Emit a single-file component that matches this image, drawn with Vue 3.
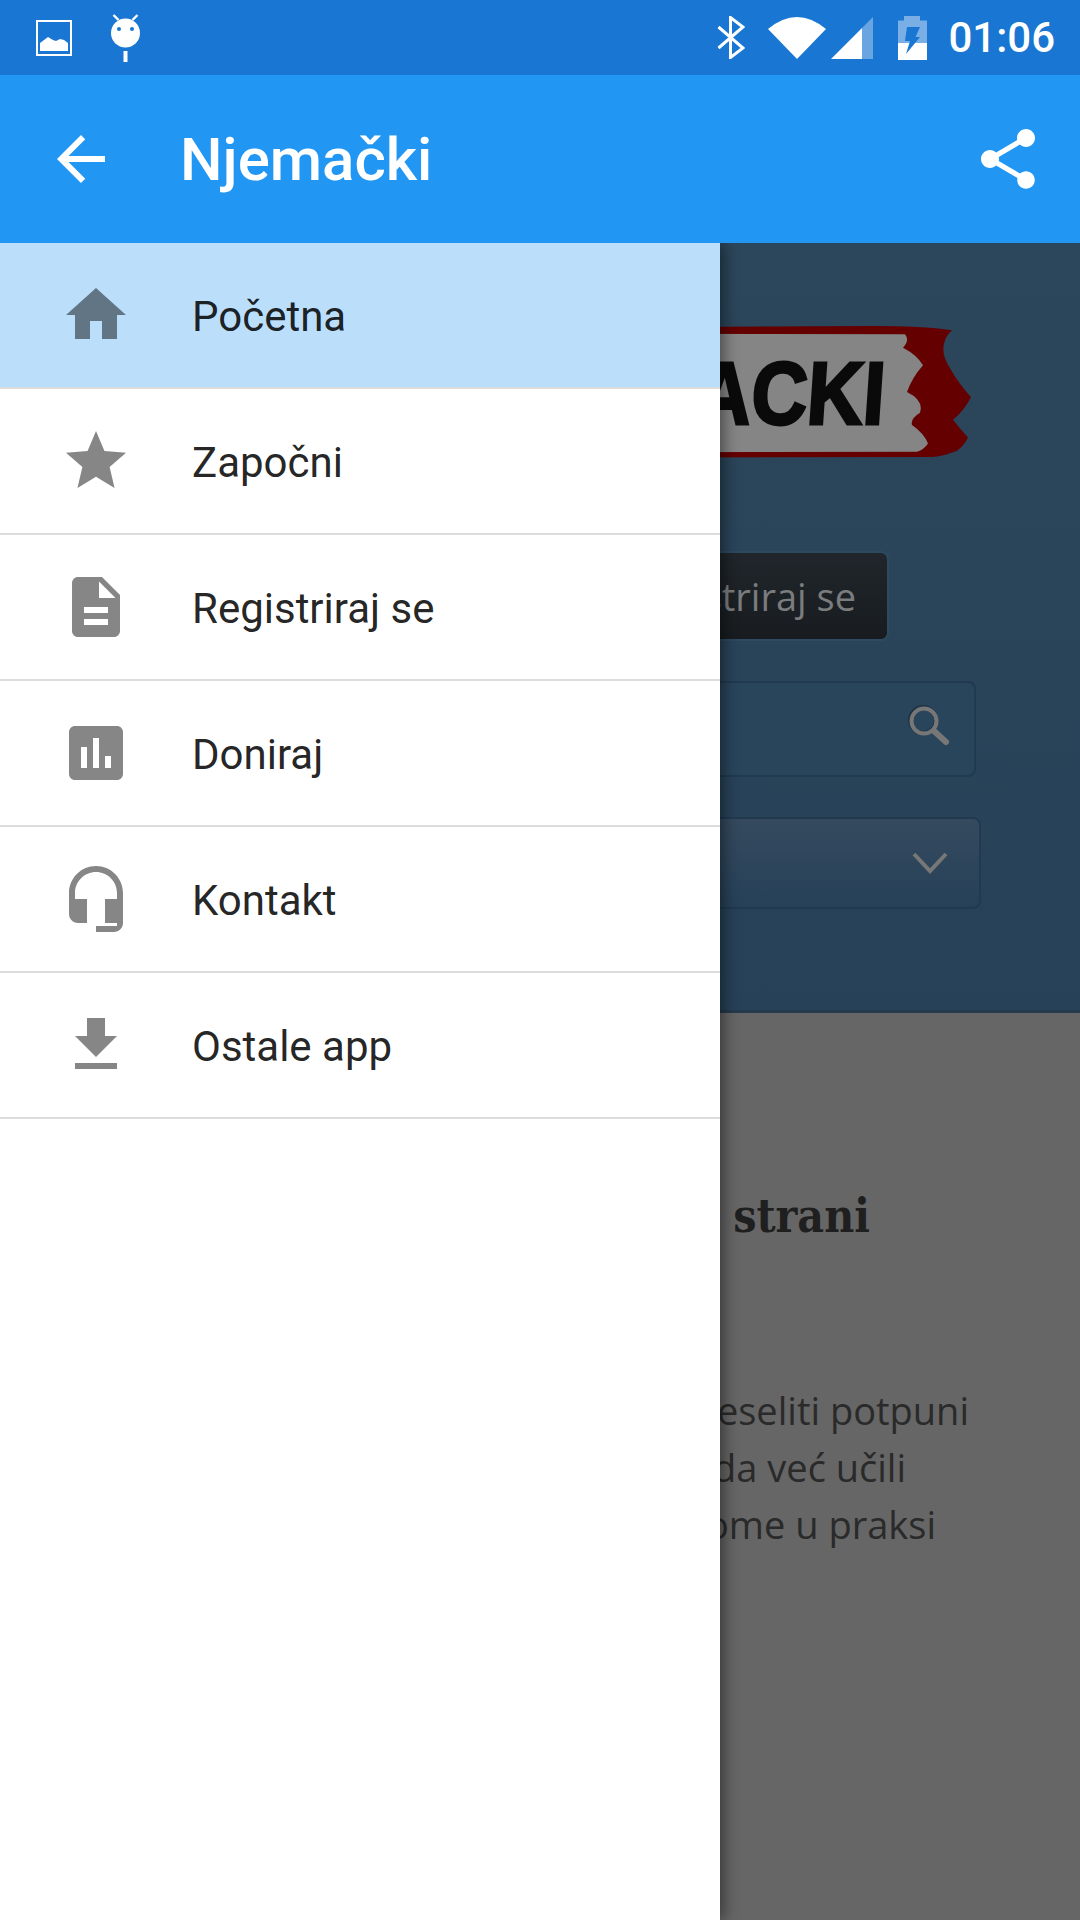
<script setup>
const menu = [
  { label: "Početna", active: true, d: "M10 20v-6h4v6h5v-8h3L12 3 2 12h3v8z" },
  { label: "Započni", d: "M12 17.27L18.18 21l-1.64-7.03L22 9.24l-7.19-.61L12 2 9.19 8.63 2 9.24l5.46 4.73L5.82 21z" },
  { label: "Registriraj se", d: "M14 2H6c-1.1 0-1.99.9-1.99 2L4 20c0 1.1.89 2 1.99 2H18c1.1 0 2-.9 2-2V8l-6-6zm2 16H8v-2h8v2zm0-4H8v-2h8v2zm-3-5V3.5L18.5 9H13z" },
  { label: "Doniraj", d: "M19 3H5c-1.1 0-2 .9-2 2v14c0 1.1.9 2 2 2h14c1.1 0 2-.9 2-2V5c0-1.1-.9-2-2-2zM9 17H7v-7h2v7zm4 0h-2V7h2v10zm4 0h-2v-4h2v4z" },
  { label: "Kontakt", d: "M12 1c-4.97 0-9 4.03-9 9v7c0 1.66 1.34 3 3 3h3v-8H5v-2c0-3.87 3.13-7 7-7s7 3.13 7 7v2h-4v8h4v1h-7v2h6c1.66 0 3-1.34 3-3V10c0-4.97-4.03-9-9-9z" },
  { label: "Ostale app", d: "M19 9h-4V3H9v6H5l7 7 7-7zM5 18v2h14v-2H5z" }
];
</script>

<template>
  <div class="screen">
    <div class="status-bar">
      <svg class="st-image" width="36" height="36" viewBox="0 0 36 36">
        <rect x="1" y="1" width="34" height="34" fill="none" stroke="#fff" stroke-width="2" />
        <path d="M4 31V23l4-3 4-3 5 3 3 1 4-2 4 1 4 3v8z" fill="#fff" />
      </svg>
      <svg class="st-robot" width="33" height="48" viewBox="0 0 32 48">
        <path d="M4 1l5 5M28 1l-5 5" stroke="#fff" stroke-width="2.4" />
        <circle cx="16" cy="19" r="14.5" fill="#fff" />
        <circle cx="9.500" cy="15" r="2" fill="#1976d2" />
        <circle cx="22.500" cy="15" r="2" fill="#1976d2" />
        <rect x="14" y="37" width="4" height="11" fill="#fff" />
      </svg>
      <svg class="st-bt" width="28" height="43" viewBox="0 0 28 43">
        <path d="M1.500 11L26 32 13.500 41.500V1.500L26 11 1.500 32" fill="none" stroke="#fff" stroke-width="3" />
      </svg>
      <svg class="st-wifi" width="58" height="42" viewBox="0 0 58 42">
        <path d="M0 12Q29-12 58 12L29 42z" fill="#fff" />
      </svg>
      <svg class="st-signal" width="42" height="42" viewBox="0 0 42 42">
        <path d="M0 42L31 11V42z" fill="#fff" />
        <path d="M31 11L42 0V42H31z" fill="#fff" fill-opacity=".35" />
      </svg>
      <svg class="st-battery" width="29" height="44" viewBox="0 0 29 44">
        <path d="M6 0H22V4.500H29V27H0V4.500H6z" fill="#fff" fill-opacity=".42" />
        <rect y="27" width="29" height="17" fill="#fff" />
        <path d="M9 11H22L17.500 21H22L8 38 12 25H7z" fill="#1976d2" />
      </svg>
      <span class="st-time">01:06</span>
    </div>

    <header class="toolbar">
      <svg class="tb-icon" width="72" height="72" viewBox="0 0 24 24">
        <path d="M20 11H7.830l5.590-5.590L12 4l-8 8 8 8 1.410-1.410L7.830 13H20v-2z" fill="#fff" />
      </svg>
      <h1 class="tb-title">Njemački</h1>
      <svg class="tb-icon tb-share" width="72" height="72" viewBox="0 0 24 24">
        <path d="M18 16.080c-.76 0-1.440.3-1.960.77L8.910 12.700c.05-.23.09-.46.09-.7s-.04-.47-.09-.7l7.050-4.110c.54.5 1.250.81 2.040.81 1.660 0 3-1.340 3-3s-1.340-3-3-3-3 1.340-3 3c0 .24.04.47.09.7L8.040 9.810C7.500 9.310 6.790 9 6 9c-1.660 0-3 1.340-3 3s1.340 3 3 3c.79 0 1.500-.31 2.040-.81l7.120 4.160c-.05.21-.08.43-.08.65 0 1.610 1.310 2.920 2.920 2.920 1.610 0 2.920-1.310 2.920-2.920s-1.310-2.920-2.920-2.920z" fill="#fff" />
      </svg>
    </header>

    <main class="main">
      <!-- web stranica ispod ladice, boje su vec zatamnjene -->
      <div class="page">
        <section class="hero">
          <svg class="logo" width="700" height="132" viewBox="-300 0 700 128" preserveAspectRatio="none">
            <path d="M-300 3L300 0Q350 0 380 4Q375 8 373 14Q368 26 378 41Q386 55 399 69Q392 82 381 91Q388 100 396 108Q392 116 385 121Q372 126 361 127L-300 128z" fill="#640000" />
            <path d="M-300 7L333 8Q338 14 331 21Q345 28 351 38Q340 50 335 64Q352 72 348 84Q338 90 340 96Q352 104 356 114Q352 120 345 122L-300 123z" fill="#858585" />
            <text class="logo-text" text-anchor="end" transform="translate(311 95) skewX(-4) scale(.9 1)">NJEMACKI</text>
          </svg>
          <button class="reg-btn">Registriraj se</button>
          <div class="search-box">
            <svg class="search-icon" width="42" height="42" viewBox="0 0 42 42">
              <circle cx="15" cy="15" r="13" fill="none" stroke="#1e3346" stroke-width="4" />
              <circle cx="16" cy="16" r="12.500" fill="none" stroke="#777" stroke-width="4" />
              <path d="M26 26L38 37" stroke="#777" stroke-width="6" stroke-linecap="round" />
            </svg>
          </div>
          <div class="select-box">
            <svg width="36" height="24" viewBox="0 0 36 24">
              <path d="M2 3L18 20 34 3" fill="none" stroke="#777" stroke-width="4" />
            </svg>
          </div>
        </section>
        <section class="article">
          <h2 class="article-title">Učenje na strani</h2>
          <p class="line line-1">Ako se želite preseliti potpuni</p>
          <p class="line line-2">iako ste možda već učili</p>
          <p class="line line-3">i znanje u tome u praksi</p>
        </section>
      </div>

      <nav class="drawer">
        <div v-for="item in menu" :key="item.label" class="row" :class="{ active: item.active }">
          <svg class="row-icon" width="72" height="72" viewBox="0 0 24 24">
            <path :d="item.d" />
          </svg>
          <span class="row-label">{{ item.label }}</span>
        </div>
      </nav>
    </main>
  </div>
</template>

<style scoped>
.screen {
  width: 1080px;
  height: 1920px;
  display: flex;
  flex-direction: column;
  overflow: hidden;
  font-family: Roboto, sans-serif;
}

/* status bar */
.status-bar {
  height: 75px;
  flex-shrink: 0;
  background: #1976d2;
  display: flex;
  align-items: center;
  padding: 0 25px 0 36px;
}
.status-bar svg {
  flex-shrink: 0;
}
.st-robot {
  margin-left: 37px;
  margin-top: 1px;
}
.st-bt {
  margin-left: auto;
}
.st-wifi {
  margin-left: 23px;
}
.st-signal {
  margin-left: 5px;
  margin-top: 1px;
}
.st-battery {
  margin-left: 25px;
}
.st-time {
  margin-left: 21px;
  font-size: 42px;
  font-weight: 500;
  color: #fff;
  line-height: 1;
}

/* toolbar */
.toolbar {
  height: 168px;
  flex-shrink: 0;
  background: #2196f3;
  display: flex;
  align-items: center;
  padding: 0 36px 0 45px;
}
.tb-title {
  margin: 0 0 0 63px;
  font-size: 60px;
  font-weight: 500;
  color: #fff;
}
.tb-share {
  margin-left: auto;
}

/* main */
.main {
  flex: 1;
  position: relative;
  overflow: hidden;
  background: #666;
}

/* stranica */
.hero {
  height: 770px;
  box-sizing: border-box;
  padding-top: 83px;
  background: linear-gradient(#2c465b, #274158);
  border-bottom: 3px solid #24394c;
  display: flex;
  flex-direction: column;
  align-items: flex-end;
}
.logo {
  margin-right: 108px;
  flex-shrink: 0;
}
.logo-text {
  font-family: "Liberation Sans", sans-serif;
  font-size: 86px;
  font-weight: 700;
  fill: #0a0a0a;
  stroke: #0a0a0a;
  stroke-width: 3px;
}
.reg-btn {
  margin: 93px 191px 0 0;
  height: 90px;
  width: 420px;
  padding: 0 31px 0 0;
  text-align: right;
  border: 2px solid #2c4a60;
  border-radius: 8px;
  background: linear-gradient(#20262b, #181c20);
  font-family: "Open Sans", sans-serif;
  font-size: 38px;
  color: #7a7c7e;
}
.search-box,
.select-box {
  display: flex;
  align-items: center;
  justify-content: flex-end;
  box-sizing: border-box;
  border: 2px solid #213a50;
  border-radius: 8px;
}
.search-box {
  margin: 40px 104px 0 0;
  width: 800px;
  height: 96px;
  padding-right: 24px;
  background: #29455c;
}
.search-icon {
  margin-bottom: 6px;
}
.select-box {
  margin: 40px 99px 0 0;
  width: 800px;
  height: 92px;
  padding-right: 31px;
  background: linear-gradient(#354a5f, #264158);
}

.article {
  display: flex;
  flex-direction: column;
  align-items: flex-end;
  white-space: nowrap;
}
.article-title {
  margin: 176px 210px 0 0;
  font-family: "DejaVu Serif Condensed", "DejaVu Serif", serif;
  font-size: 46px;
  font-weight: 700;
  color: #1f1f1f;
}
.line {
  margin: 0;
  font-family: "Open Sans", sans-serif;
  font-size: 38px;
  line-height: 57px;
  color: #2a2a2a;
}
.line-1 {
  margin-top: 139px;
  margin-right: 111px;
}
.line-2 {
  margin-right: 174px;
}
.line-3 {
  margin-right: 144px;
}

/* ladica */
.drawer {
  position: absolute;
  top: 0;
  left: 0;
  bottom: 0;
  width: 720px;
  background: #fff;
  box-shadow: 4px 0 14px rgba(0, 0, 0, 0.45);
}
.row {
  height: 146px;
  box-sizing: border-box;
  border-bottom: 2px solid #dcdcdc;
  display: flex;
  align-items: center;
  padding-left: 60px;
}
.row.active {
  background: #bbdefb;
}
.row-icon {
  flex-shrink: 0;
  opacity: 0.47;
}
.row-label {
  margin: 3px 0 0 60px;
  font-size: 42px;
  color: rgba(0, 0, 0, 0.87);
}
</style>
